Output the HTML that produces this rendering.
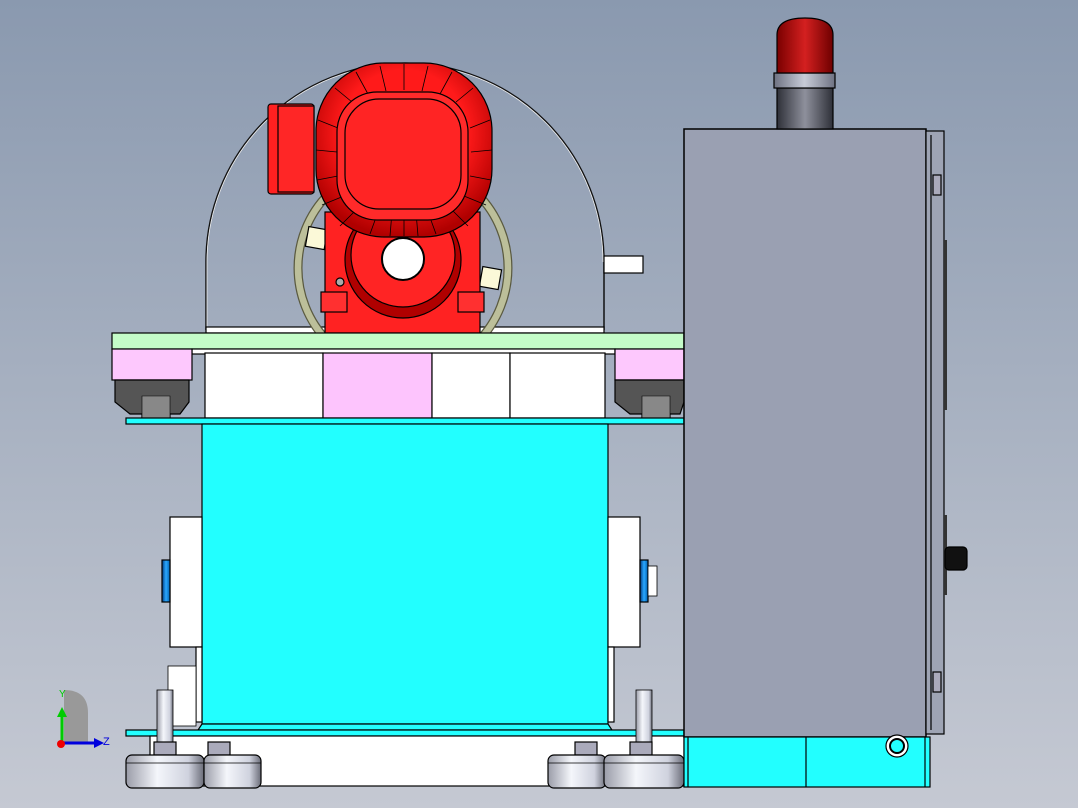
<!DOCTYPE html>
<html><head><meta charset="utf-8"><style>
html,body{margin:0;padding:0;width:1078px;height:808px;overflow:hidden}
body{background:linear-gradient(#8a99af,#c5c9d3)}
svg{display:block}
</style></head><body>
<svg width="1078" height="808" viewBox="0 0 1078 808" xmlns="http://www.w3.org/2000/svg">
<defs>
<linearGradient id="cyl" x1="0" x2="1"><stop offset="0" stop-color="#9a9ca8"/><stop offset=".4" stop-color="#f4f6fb"/><stop offset=".8" stop-color="#cfd2de"/><stop offset="1" stop-color="#6a6c78"/></linearGradient>
<linearGradient id="red" x1="0" x2="1"><stop offset="0" stop-color="#7a0000"/><stop offset=".5" stop-color="#d42020"/><stop offset="1" stop-color="#6e0000"/></linearGradient>
<radialGradient id="fan" cx=".5" cy=".4" r=".6"><stop offset=".6" stop-color="#ff1a1a"/><stop offset="1" stop-color="#b00000"/></radialGradient>
<linearGradient id="dk" x1="0" x2="1"><stop offset="0" stop-color="#2e3038"/><stop offset=".5" stop-color="#8e909c"/><stop offset="1" stop-color="#2e3038"/></linearGradient>
<linearGradient id="band" x1="0" x2="1"><stop offset="0" stop-color="#6e7282"/><stop offset=".5" stop-color="#c8ccd8"/><stop offset="1" stop-color="#6e7282"/></linearGradient>
<linearGradient id="blu" x1="0" x2="1"><stop offset="0" stop-color="#003a80"/><stop offset=".5" stop-color="#2aa8ff"/><stop offset="1" stop-color="#0060b0"/></linearGradient>
</defs>
<g stroke="#000" stroke-width="1.2">
<path d="M206 330 V262 A199 199 0 0 1 604 262 V330" fill="none" stroke="#111" stroke-width="1.5"/>
<path d="M207 330 V262 A198 198 0 0 1 603 262" fill="none" stroke="#eee" stroke-width="0.8"/>
<rect x="604" y="256" width="39" height="17" fill="#fff"/>
<rect x="206" y="327" width="398" height="6" fill="#fff"/>
<circle cx="403" cy="268" r="105" fill="none" stroke="#5a5a40" stroke-width="9"/>
<circle cx="403" cy="268" r="105" fill="none" stroke="#bcbf9a" stroke-width="6.5"/>
<rect x="307" y="228" width="19" height="20" fill="#fbf9d8" transform="rotate(10 316 238)"/>
<rect x="481" y="268" width="19" height="20" fill="#fbf9d8" transform="rotate(10 490 278)"/>
<rect x="325" y="212" width="155" height="121" fill="#ff2222"/>
<circle cx="403" cy="260" r="58" fill="#b00000"/>
<circle cx="403" cy="255" r="52" fill="#ff2424"/>
<circle cx="403" cy="259" r="21" fill="#fff" stroke-width="2"/>
<circle cx="340" cy="282" r="4" fill="#aaa"/>
<rect x="321" y="292" width="26" height="20" fill="#ff3030"/>
<rect x="458" y="292" width="26" height="20" fill="#ff3030"/>
<rect x="268" y="104" width="46" height="90" rx="3" fill="#ff2020"/>
<rect x="278" y="106" width="36" height="86" fill="#ff2626"/>
<rect x="316" y="63" width="176" height="174" rx="68" fill="url(#fan)"/>
<g stroke-width="0.8">
<path d="M404 64V90M380 66L386 91M428 66L422 91M356 72L368 94M452 72L440 94M335 88L352 102M473 88L456 102M318 120L338 128M490 120L470 128M316 150L337 152M492 150L471 152M317 180L338 176M491 180L470 176M322 205L344 196M486 205L464 196M340 226L356 210M468 226L452 210M370 234L378 212M436 234L428 212M404 236V212M390 236L392 212M418 236L416 212"/>
</g>
<rect x="337" y="92" width="131" height="128" rx="40" fill="#ff2a2a"/>
<rect x="345" y="99" width="116" height="110" rx="34" fill="#ff2424"/>
<rect x="112" y="333" width="572" height="16" fill="#c4fcc8"/>
<rect x="192" y="349" width="423" height="5" fill="#fff"/>
<rect x="205" y="353" width="118" height="65" fill="#fff"/>
<rect x="323" y="353" width="109" height="65" fill="#fdc4fd"/>
<rect x="432" y="353" width="78" height="65" fill="#fff"/>
<rect x="510" y="353" width="95" height="65" fill="#fff"/>
<rect x="112" y="349" width="80" height="31" fill="#fdc8fd"/>
<rect x="615" y="349" width="69" height="31" fill="#fdc8fd"/>
<path d="M115 380H189V402L180 414H170V418H142V414H130L115 402Z" fill="#555"/>
<path d="M142 396H170V418H142Z" fill="#888" stroke-width=".6"/>
<path d="M615 380H684V402L680 414H670V418H642V414H630L615 402Z" fill="#555"/>
<path d="M642 396H670V418H642Z" fill="#888" stroke-width=".6"/>
<rect x="126" y="418" width="558" height="6" fill="#22ffff"/>
<rect x="202" y="424" width="406" height="300" fill="#22ffff"/>
<rect x="170" y="517" width="32" height="130" fill="#fff"/>
<rect x="608" y="517" width="32" height="130" fill="#fff"/>
<rect x="162" y="560" width="8" height="42" fill="url(#blu)"/>
<rect x="640" y="560" width="8" height="42" fill="url(#blu)"/>
<rect x="648" y="566" width="9" height="30" fill="#fff" stroke-width=".8"/>
<rect x="196" y="647" width="6" height="75" fill="#fff"/>
<rect x="608" y="647" width="6" height="75" fill="#fff"/>
<rect x="168" y="666" width="28" height="60" fill="#fff" stroke-width=".8"/>
<path d="M202 724H608L612 730H198Z" fill="#22ffff"/>
<rect x="126" y="730" width="558" height="6" fill="#22ffff"/>
<rect x="150" y="736" width="534" height="50" fill="#fff"/>
<rect x="157" y="690" width="16" height="52" fill="url(#cyl)" stroke-width=".8"/>
<rect x="636" y="690" width="16" height="52" fill="url(#cyl)" stroke-width=".8"/>
<rect x="154" y="742" width="22" height="13" fill="#aab" /><rect x="208" y="742" width="22" height="13" fill="#aab"/>
<rect x="575" y="742" width="22" height="13" fill="#aab"/><rect x="630" y="742" width="22" height="13" fill="#aab"/>
<rect x="126" y="755" width="78" height="33" rx="6" fill="url(#cyl)"/>
<rect x="204" y="755" width="57" height="33" rx="6" fill="url(#cyl)"/>
<rect x="548" y="755" width="58" height="33" rx="6" fill="url(#cyl)"/>
<rect x="604" y="755" width="80" height="33" rx="6" fill="url(#cyl)"/>
<path d="M126 763H261M548 763H684" stroke-width=".8"/>
<rect x="684" y="129" width="242" height="608" fill="#9aa0b2" stroke-width="1.5"/>
<rect x="926" y="131" width="18" height="603" fill="#9ea4b4"/>
<line x1="931" y1="135" x2="931" y2="730"/>
<rect x="944" y="240" width="3" height="170" fill="#333" stroke="none"/>
<rect x="944" y="515" width="3" height="80" fill="#333" stroke="none"/>
<rect x="933" y="175" width="8" height="20" fill="#aab"/>
<rect x="933" y="672" width="8" height="20" fill="#aab"/>
<rect x="945" y="547" width="22" height="23" rx="4" fill="#111"/>
<rect x="684" y="737" width="246" height="50" fill="#22ffff"/>
<line x1="688" y1="737" x2="688" y2="787"/><line x1="806" y1="737" x2="806" y2="787"/><line x1="925" y1="737" x2="925" y2="787"/>
<circle cx="897" cy="746" r="11" fill="#fff"/><circle cx="897" cy="746" r="7" fill="#22ffff" stroke-width="2"/>
<rect x="777" y="88" width="56" height="41" fill="url(#dk)"/>
<rect x="774" y="73" width="61" height="15" fill="url(#band)"/>
<path d="M777 73V35Q777 18 805 18Q833 18 833 35V73Z" fill="url(#red)"/>
</g>
<g>
<path d="M88 713Q88 690 64 690V743H88Z" fill="#999"/>
<line x1="62" y1="743" x2="62" y2="715" stroke="#0c0" stroke-width="3"/>
<path d="M57 717L62 707L67 717Z" fill="#0c0"/>
<line x1="62" y1="743" x2="96" y2="743" stroke="#00d" stroke-width="3"/>
<path d="M94 738L104 743L94 748Z" fill="#00d"/>
<circle cx="61" cy="744" r="4" fill="#e00"/>
<text x="59" y="697" font-family="Liberation Sans,sans-serif" font-size="10" fill="#0c0">Y</text>
<text x="103" y="745" font-family="Liberation Sans,sans-serif" font-size="11" fill="#00d">Z</text>
</g>
</svg>
</body></html>
